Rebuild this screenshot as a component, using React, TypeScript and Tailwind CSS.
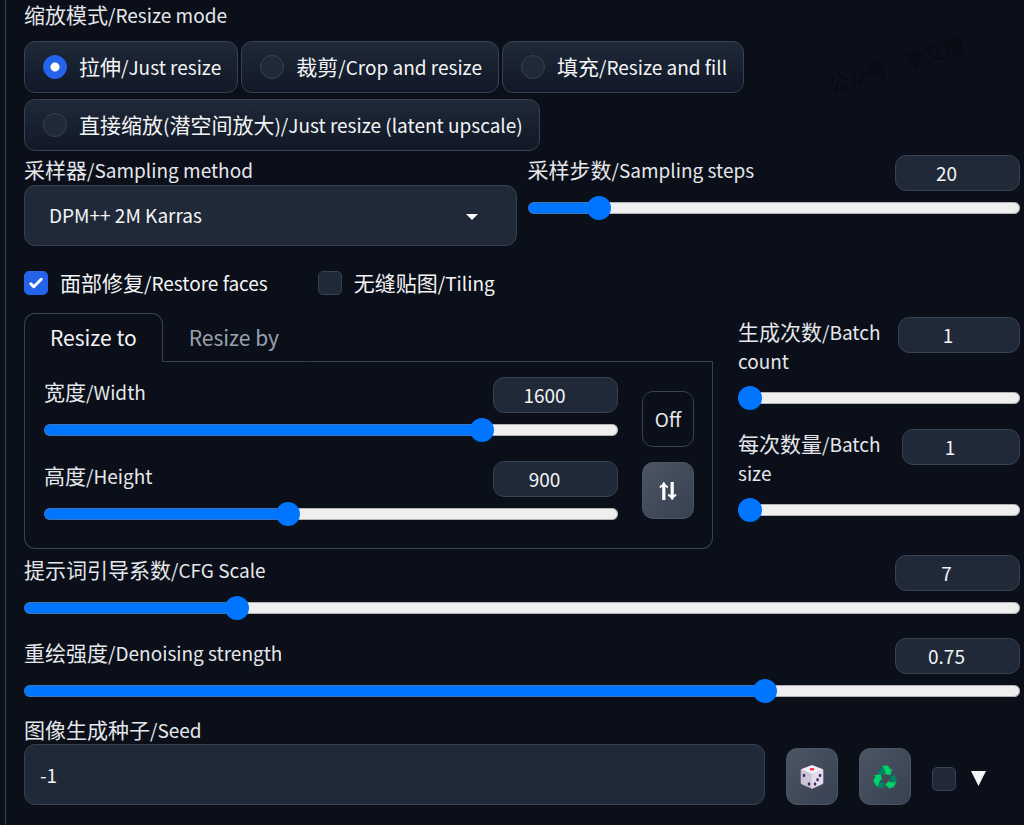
import { useId, useState, type CSSProperties, type ReactNode } from "react";

function Caption({ zh, en }: { zh: string; en: string }) {
  return (
    <>
      <span className="text-[21px] leading-none">{zh}</span>
      <span className="text-[19px] leading-none">/{en}</span>
    </>
  );
}

type SliderProps = {
  zh: string;
  en: string;
  min: number;
  max: number;
  step?: number;
  initial: number;
  boxWidth?: string;
};

function SliderField({ zh, en, min, max, step = 1, initial, boxWidth = "w-[125px]" }: SliderProps) {
  const id = useId();
  const [value, setValue] = useState(initial);
  const ratio = (value - min) / (max - min);
  const style = { "--fill": `calc(12px + ${ratio} * (100% - 24px))` } as CSSProperties;
  return (
    <div className="flex min-w-0 flex-col gap-[5px]">
      <div className="flex items-start justify-between">
        <label htmlFor={id} className="min-w-0 flex-1 pb-[6px] text-[21px] leading-[29px] text-gray-200">
          <Caption zh={zh} en={en} />
        </label>
        <input
          id={id}
          type="number"
          min={min}
          max={max}
          step={step}
          value={value}
          onChange={(e) => setValue(Number(e.target.value))}
          className={`${boxWidth} h-9 shrink-0 appearance-none rounded-[11px] border border-[#374151] bg-[#1f2937] pr-8 pb-[2px] pl-[10px] text-center text-[19px] text-gray-100 [-moz-appearance:textfield] [&::-webkit-inner-spin-button]:appearance-none`}
        />
      </div>
      <input
        type="range"
        aria-label={`${zh}/${en}`}
        min={min}
        max={max}
        step={step}
        value={value}
        onChange={(e) => setValue(Number(e.target.value))}
        style={style}
        className="m-0 h-6 w-full cursor-pointer appearance-none bg-transparent [&::-webkit-slider-runnable-track]:h-3 [&::-webkit-slider-runnable-track]:rounded-full [&::-webkit-slider-runnable-track]:bg-[linear-gradient(to_right,#0075ff_var(--fill),#efefef_var(--fill))] [&::-webkit-slider-runnable-track]:shadow-[inset_0_0_0_1px_rgba(118,118,118,0.5)] [&::-webkit-slider-thumb]:-mt-[6px] [&::-webkit-slider-thumb]:size-6 [&::-webkit-slider-thumb]:appearance-none [&::-webkit-slider-thumb]:rounded-full [&::-webkit-slider-thumb]:bg-[#0075ff]"
      />
    </div>
  );
}

function RadioOption({ children, checked, onSelect }: { children: ReactNode; checked: boolean; onSelect: () => void }) {
  return (
    <label className="flex h-[52px] items-center gap-3 rounded-[11px] border border-[#374151] bg-linear-to-b from-[#1f2937] to-[#111827] pr-4 pl-[18px] text-[21px] whitespace-nowrap text-gray-100">
      <input
        type="radio"
        name="resize-mode"
        checked={checked}
        onChange={onSelect}
        className="size-6 shrink-0 appearance-none rounded-full border border-[#374151] bg-[#1f2937] checked:border-[#2563eb] checked:bg-[#2563eb] checked:bg-[radial-gradient(circle,#fff_0_4px,transparent_5px)]"
      />
      <span>{children}</span>
    </label>
  );
}

function CheckBox({ label, defaultChecked = false, children }: { label?: string; defaultChecked?: boolean; children?: ReactNode }) {
  return (
    <label className="flex h-6 items-center gap-3 text-[21px] text-gray-100">
      <span className="grid size-6 shrink-0">
        <input
          type="checkbox"
          aria-label={label}
          defaultChecked={defaultChecked}
          className="peer col-start-1 row-start-1 size-6 appearance-none rounded-[5px] border border-[#374151] bg-[#1f2937] checked:border-[#2563eb] checked:bg-[#2563eb]"
        />
        <svg viewBox="0 0 16 16" className="pointer-events-none invisible col-start-1 row-start-1 size-6 fill-white peer-checked:visible">
          <path d="M12.207 4.793a1 1 0 010 1.414l-5 5a1 1 0 01-1.414 0l-2-2a1 1 0 011.414-1.414L6.5 9.086l4.293-4.293a1 1 0 011.414 0z" />
        </svg>
      </span>
      {children && <span>{children}</span>}
    </label>
  );
}

function ToolButton({ label, children }: { label: string; children: ReactNode }) {
  return (
    <button
      type="button"
      aria-label={label}
      className="flex h-[57px] w-[52px] shrink-0 items-center justify-center rounded-[11px] border border-[#4b5563] bg-linear-to-br from-[#4b5563] to-[#374151] text-white"
    >
      {children}
    </button>
  );
}

function Dice() {
  return (
    <svg viewBox="0 0 24 24" className="size-6">
      <path d="M12 .6 22.600 4.600 12 9.200 1.400 4.600z" fill="#f4eef8" stroke="#f4eef8" strokeLinejoin="round" />
      <path d="M1 4.800 12 9.600V23.400L1.800 19Q1 18.600 1 17.800z" fill="#cdc4d6" stroke="#cdc4d6" strokeWidth=".6" strokeLinejoin="round" />
      <path d="M12 9.600 23 4.800V17.800Q23 18.600 22.200 19L12 23.400z" fill="#e4dcec" stroke="#e4dcec" strokeWidth=".6" strokeLinejoin="round" />
      <ellipse cx="12" cy="4.300" rx="2.500" ry="1.300" fill="#f8312f" />
      <g fill="#402a64">
        <ellipse cx="4" cy="10.500" rx="1.300" ry="1.700" />
        <ellipse cx="9" cy="19" rx="1.300" ry="1.700" />
        <ellipse cx="20" cy="10.500" rx="1.300" ry="1.700" />
        <ellipse cx="17.600" cy="14.800" rx="1.300" ry="1.700" />
        <ellipse cx="15" cy="19" rx="1.300" ry="1.700" />
      </g>
    </svg>
  );
}

function Recycle() {
  return (
    <svg viewBox="0 0 24 24" className="size-6">
      <g fill="#008463">
        <path d="M9.600 1 12.600 5.800 9.800 10.500 5 7.800z" />
        <path d="M16.800 12 21.400 9.400 23.800 14.500Q24 16.500 22 17.300L19 17.500z" />
        <path d="M1.200 18 4.800 17.300H11V22.800H5Q3.400 22.600 2.600 21z" />
      </g>
      <g fill="#00d26a">
        <path d="M9.500 .6H14Q15.200 .8 15.900 2L17.400 4.400 19.200 3.500 17.500 10.300 10.800 8.800 12.800 7.700z" />
        <path d="M1 10.600 7.500 8.900 9.400 15.500 7.600 14.500 4.400 21.300Q3 20.800 2.400 19.600L.5 16.600Q.2 15.500 .8 14.500L2.500 11.700z" />
        <path d="M23.800 15.500 21.600 20.600Q20.800 22.500 19 22.700H17V24L12 19.700 17 15.200V17.200H21.500Q23 17 23.800 15.500z" />
      </g>
    </svg>
  );
}

export default function App() {
  const [mode, setMode] = useState(0);
  const [tab, setTab] = useState(0);
  return (
    <div className="min-h-screen bg-[#0b0f19] pl-[5px] font-['Noto_Sans_CJK_SC',sans-serif]">
      <main className="relative flex min-h-screen flex-col border-l border-[#374151] pr-1 pb-5 pl-[18px]">
        <p className="pointer-events-none absolute top-[50px] right-[58px] -rotate-[17deg] text-[20px] text-[#070a12]">公众号：李又懂</p>

        <fieldset>
          <legend className="h-[30px] text-[21px] leading-[29px] text-gray-200">
            <Caption zh="缩放模式" en="Resize mode" />
          </legend>
          <div className="mt-[11px] flex flex-wrap gap-x-[3px] gap-y-[6px]">
            <RadioOption checked={mode === 0} onSelect={() => setMode(0)}>
              <Caption zh="拉伸" en="Just resize" />
            </RadioOption>
            <RadioOption checked={mode === 1} onSelect={() => setMode(1)}>
              <Caption zh="裁剪" en="Crop and resize" />
            </RadioOption>
            <RadioOption checked={mode === 2} onSelect={() => setMode(2)}>
              <Caption zh="填充" en="Resize and fill" />
            </RadioOption>
            <RadioOption checked={mode === 3} onSelect={() => setMode(3)}>
              <span className="text-[21px] leading-none">直接缩放</span>
              <span className="text-[19px] leading-none">(</span>
              <span className="text-[21px] leading-none">潜空间放大</span>
              <span className="text-[19px] leading-none">)/Just resize (latent upscale)</span>
            </RadioOption>
          </div>
        </fieldset>

        <div className="mt-1 grid grid-cols-2 gap-[11px]">
          <div>
            <label htmlFor="sampler" className="block h-[30px] text-[21px] leading-[29px] text-gray-200">
              <Caption zh="采样器" en="Sampling method" />
            </label>
            <div className="relative">
              <select
                id="sampler"
                className="h-[61px] w-full appearance-none rounded-[11px] border border-[#374151] bg-[#1f2937] px-6 text-[19px] text-gray-100"
              >
                <option>DPM++ 2M Karras</option>
              </select>
              <svg viewBox="0 0 12 6" className="pointer-events-none absolute top-[29px] right-[39px] h-[6px] w-3 fill-white">
                <path d="M0 0h12L6 6z" />
              </svg>
            </div>
          </div>
          <SliderField zh="采样步数" en="Sampling steps" min={1} max={150} initial={20} />
        </div>

        <div className="mt-[25px] flex gap-[50px]">
          <CheckBox defaultChecked>
            <Caption zh="面部修复" en="Restore faces" />
          </CheckBox>
          <CheckBox>
            <Caption zh="无缝贴图" en="Tiling" />
          </CheckBox>
        </div>

        <div className="mt-[18px] grid grid-cols-[689fr_282fr] gap-[25px]">
          <div className="flex min-w-0 flex-col">
            <div role="tablist" className="flex h-[49px] text-[21px]">
              {["Resize to", "Resize by"].map((name, i) => (
                <button
                  key={name}
                  type="button"
                  role="tab"
                  aria-selected={tab === i}
                  onClick={() => setTab(i)}
                  className={
                    tab === i
                      ? "rounded-t-[11px] border border-b-0 border-[#374151] px-[25px] pb-px text-gray-100"
                      : "border border-transparent border-b-[#374151] px-[25px] text-gray-400"
                  }
                >
                  {name}
                </button>
              ))}
              <span className="flex-1 border-b border-[#374151]" />
            </div>
            <div className="flex items-start gap-6 rounded-b-[11px] border border-t-0 border-[#374151] pt-[15px] pr-[18px] pb-[22px] pl-[19px]">
              <div className="flex min-w-0 flex-1 flex-col gap-[19px]">
                <SliderField zh="宽度" en="Width" min={64} max={2048} initial={1600} />
                <SliderField zh="高度" en="Height" min={64} max={2048} initial={900} />
              </div>
              <div className="flex flex-col gap-[15px] pt-[14px]">
                <button type="button" className="h-14 w-[52px] rounded-[11px] border border-[#374151] text-[19px] text-gray-200">
                  Off
                </button>
                <ToolButton label="Swap width and height">
                  <svg viewBox="0 0 18 18" className="size-[18px] fill-none stroke-white">
                    <path d="M4.800 18V2M13.200 0v16" strokeWidth="3.200" />
                    <path d="M.8 5.200Q3.600 4.200 4.800 1.400 6 4.200 8.800 5.200M9.200 12.800Q12 13.800 13.200 16.600 14.400 13.800 17.200 12.800" strokeWidth="2" />
                  </svg>
                </ToolButton>
              </div>
            </div>
          </div>
          <div className="flex min-w-0 flex-col gap-[19px] pt-1">
            <SliderField zh="生成次数" en="Batch count" min={1} max={100} initial={1} boxWidth="w-[122px]" />
            <SliderField zh="每次数量" en="Batch size" min={1} max={8} initial={1} boxWidth="w-[118px]" />
          </div>
        </div>

        <div className="mt-[6px] flex flex-col gap-[18px]">
          <SliderField zh="提示词引导系数" en="CFG Scale" min={1} max={30} step={0.5} initial={7} />
          <SliderField zh="重绘强度" en="Denoising strength" min={0} max={1} step={0.01} initial={0.75} />
        </div>

        <div className="mt-3 flex items-end gap-[21px]">
          <div className="min-w-0 flex-1">
            <label htmlFor="seed" className="block h-[29px] text-[21px] leading-[29px] text-gray-200">
              <Caption zh="图像生成种子" en="Seed" />
            </label>
            <input
              id="seed"
              type="text"
              defaultValue="-1"
              className="block h-[61px] w-full rounded-[11px] border border-[#374151] bg-[#1f2937] px-[15px] text-[19px] text-gray-100"
            />
          </div>
          <ToolButton label="Random seed">
            <Dice />
          </ToolButton>
          <ToolButton label="Reuse seed">
            <Recycle />
          </ToolButton>
          <div className="flex h-[53px] items-center gap-[15px] pr-[34px]">
            <CheckBox label="Extra" />
            <svg viewBox="0 0 15 15" className="h-[15px] w-[15px] fill-gray-100">
              <path d="M0 0h15L7.500 15z" />
            </svg>
          </div>
        </div>
      </main>
    </div>
  );
}
